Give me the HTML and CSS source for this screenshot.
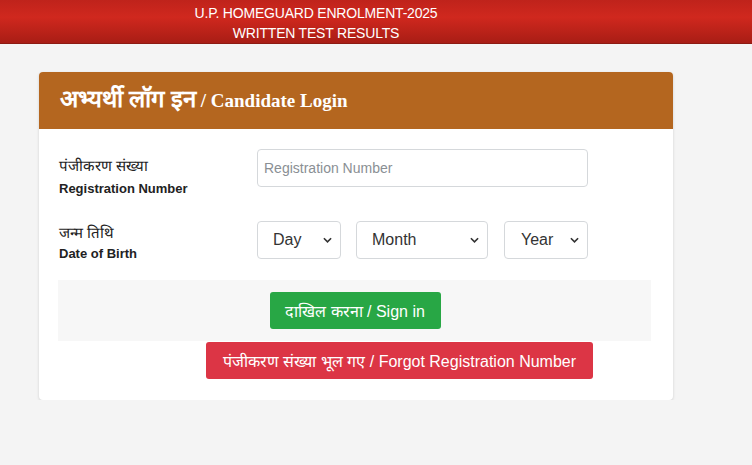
FILE: index.html
```html
<!DOCTYPE html>
<html lang="hi">
<head>
<meta charset="utf-8">
<title>Candidate Login</title>
<link rel="stylesheet" href="styles.css">
</head>
<body>
<header class="topbar">
  <div class="topbar-line">U.P. HOMEGUARD ENROLMENT-2025</div>
  <div class="topbar-line">WRITTEN TEST RESULTS</div>
</header>
<main class="card">
  <div class="card-head">
    <h1 class="card-title"><span class="hi-title">अभ्यर्थी लॉग इन</span> / Candidate Login</h1>
  </div>
  <div class="card-body">
    <div class="form-row row-reg">
      <div class="label">
        <div class="label-hi">पंजीकरण संख्या</div>
        <div class="label-en">Registration Number</div>
      </div>
      <input class="field reg" type="text" placeholder="Registration Number">
    </div>
    <div class="form-row row-dob">
      <div class="label">
        <div class="label-hi">जन्म तिथि</div>
        <div class="label-en">Date of Birth</div>
      </div>
      <div class="selects">
        <div class="select sel-day"><span>Day</span><svg viewBox="0 0 10 6" class="chev"><path d="M1 1l4 4 4-4" fill="none" stroke="#333" stroke-width="1.8"/></svg></div>
        <div class="select sel-month"><span>Month</span><svg viewBox="0 0 10 6" class="chev"><path d="M1 1l4 4 4-4" fill="none" stroke="#333" stroke-width="1.8"/></svg></div>
        <div class="select sel-year"><span>Year</span><svg viewBox="0 0 10 6" class="chev"><path d="M1 1l4 4 4-4" fill="none" stroke="#333" stroke-width="1.8"/></svg></div>
      </div>
    </div>
    <div class="band">
      <button class="btn btn-green">दाखिल करना / Sign in</button>
    </div>
    <div class="forgot-row">
      <button class="btn btn-red">पंजीकरण संख्या भूल गए / Forgot Registration Number</button>
    </div>
  </div>
</main>
</body>
</html>
```

FILE: styles.css
```css
html, body {
  margin: 0;
  padding: 0;
}
body {
  background: #f4f4f4;
  font-family: "Liberation Sans", Arial, sans-serif;
  color: #212529;
}
.topbar {
  height: 44px;
  background: linear-gradient(to bottom, #bf231b 0%, #d0281e 40%, #a81d15 100%);
  border-bottom: 1px solid #8c1a12;
  color: #fff;
  text-align: center;
  font-family: "Liberation Sans", Arial, sans-serif;
  font-size: 14px;
  letter-spacing: -0.2px;
  box-sizing: border-box;
  padding: 3px 120px 0 0;
}
.topbar-line {
  line-height: 20px;
}
.card {
  margin: 28px 0 0 39px;
  width: 634px;
  background: #fff;
  border-radius: 4px;
  box-shadow: 0 1px 3px rgba(0,0,0,0.15);
  overflow: hidden;
}
.card-head {
  background: #b4661f;
  height: 57px;
  box-sizing: border-box;
  padding: 13px 21px 0;
}
.card-title {
  margin: 0;
  color: #fff;
  font-family: "Liberation Serif", "Times New Roman", serif;
  font-weight: bold;
  font-size: 19px;
  line-height: 28px;
}
.hi-title {
  font-size: 24px;
}
.card-body {
  padding: 20px 21px 21px 20px;
}
.form-row {
  display: flex;
  align-items: flex-start;
  height: 38px;
}
.label {
  width: 198px;
  padding-top: 5px;
}
.label-hi {
  font-size: 15px;
  line-height: 24px;
  color: #222;
}
.label-en {
  font-size: 13px;
  font-weight: bold;
  line-height: 18px;
  color: #222;
}
.row-reg .label-en {
  margin-top: 2px;
}
.field {
  width: 331px;
  height: 38px;
  box-sizing: border-box;
  border: 1px solid #d5d8db;
  border-radius: 4px;
  padding: 0 6px;
  font-family: "Liberation Sans", Arial, sans-serif;
  font-size: 14px;
  color: #333;
  margin: 0;
}
.field::placeholder {
  color: #8a8f94;
}
.row-dob {
  margin-top: 34px;
}
.row-dob .label {
  padding-top: 0;
}
.selects {
  display: flex;
  gap: 15px;
}
.select {
  height: 38px;
  box-sizing: border-box;
  border: 1px solid #d5d8db;
  border-radius: 4px;
  display: flex;
  align-items: center;
  justify-content: space-between;
  padding: 0 8px 0 15px;
  font-size: 16px;
  color: #333;
}
.sel-day { width: 84px; }
.sel-month { width: 132px; }
.sel-year { width: 84px; margin-left: 1px; padding-left: 16px; }
.chev {
  width: 9px;
  height: 6px;
}
.band {
  margin-top: 21px;
  width: 593px;
  margin-left: -1px;
  height: 61px;
  background: #f7f7f7;
  display: flex;
  justify-content: center;
  align-items: center;
}
.btn {
  border: none;
  border-radius: 3px;
  color: #fff;
  font-family: "Liberation Sans", Arial, sans-serif;
  font-size: 16px;
  height: 37px;
  cursor: pointer;
  padding: 0;
}
.btn-green {
  background: #28a745;
  width: 171px;
  margin-left: 1px;
}
.forgot-row {
  display: flex;
  padding-left: 147px;
  margin-top: 1px;
}
.btn-red {
  background: #dc3545;
  width: 387px;
}
```
